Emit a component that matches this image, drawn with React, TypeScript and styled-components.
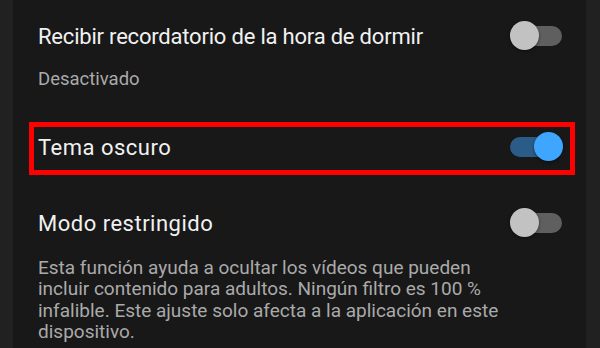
import React from "react";
import styled, { createGlobalStyle } from "styled-components";

const GlobalStyle = createGlobalStyle`
  html, body {
    margin: 0;
    padding: 0;
    background: #212121;
  }
  body {
    font-family: Roboto, "Noto Sans", sans-serif;
    -webkit-font-smoothing: antialiased;
  }
`;

const Page = styled.div`
  width: 600px;
  height: 348px;
  overflow: hidden;
  background: #212121;
  display: flex;
`;

const Panel = styled.div`
  margin-left: 13px;
  width: 573px;
  height: 348px;
  background: #181818;
  box-sizing: border-box;
  padding: 0 23px 0 25px;
  display: flex;
  flex-direction: column;
`;

const Row = styled.div<{ $top: number; $height: number; $highlight?: boolean }>`
  display: flex;
  align-items: center;
  justify-content: space-between;
  box-sizing: border-box;
  margin-top: ${(p) => p.$top}px;
  height: ${(p) => p.$height}px;
  ${(p) =>
    p.$highlight
      ? `
    margin-left: -9px;
    margin-right: -12px;
    border: 5px solid #ff0000;
    padding: 0 7px 3px 4px;
  `
      : ""}
`;

const Title = styled.div<{ $tracking: number }>`
  font-size: 22px;
  color: #f1f1f1;
  letter-spacing: ${(p) => p.$tracking}px;
  white-space: nowrap;
`;

const Subtitle = styled.div<{ $top: number }>`
  margin-top: ${(p) => p.$top}px;
  font-size: 18.5px;
  line-height: 22px;
  color: #aaaaaa;
`;

const Description = styled.div<{ $top: number }>`
  margin-top: ${(p) => p.$top}px;
  font-size: 19px;
  line-height: 21.3px;
  color: #aaaaaa;
  max-width: 470px;
`;

const Switch = styled.div`
  position: relative;
  width: 53px;
  height: 30px;
  flex: 0 0 auto;
`;

const Track = styled.div<{ $on: boolean }>`
  position: absolute;
  left: 0;
  right: 1px;
  top: 5px;
  height: 20px;
  border-radius: 10px;
  background: ${(p) => (p.$on ? "#2b5c88" : "#5f5f5f")};
`;

const Thumb = styled.div<{ $on: boolean }>`
  position: absolute;
  top: 0;
  ${(p) => (p.$on ? "right: 0;" : "left: 0;")}
  width: 29px;
  height: 29px;
  border-radius: 50%;
  background: ${(p) => (p.$on ? "#3ea6ff" : "#c2c2c2")};
  box-shadow: 0 1px 3px rgba(0, 0, 0, 0.5);
`;

const Toggle = ({ on }: { on: boolean }) => (
  <Switch>
    <Track $on={on} />
    <Thumb $on={on} />
  </Switch>
);

export default function App() {
  return (
    <>
      <GlobalStyle />
      <Page>
        <Panel>
          <Row $top={12} $height={48}>
            <Title $tracking={-0.2}>Recibir recordatorio de la hora de dormir</Title>
            <Toggle on={false} />
          </Row>
          <Subtitle $top={8}>Desactivado</Subtitle>
          <Row $top={32} $height={53} $highlight>
            <Title $tracking={0.5}>Tema oscuro</Title>
            <Toggle on={true} />
          </Row>
          <Row $top={24} $height={48}>
            <Title $tracking={0.5}>Modo restringido</Title>
            <Toggle on={false} />
          </Row>
          <Description $top={10}>
            Esta función ayuda a ocultar los vídeos que pueden incluir contenido
            para adultos. Ningún filtro es 100 % infalible. Este ajuste solo
            afecta a la aplicación en este dispositivo.
          </Description>
        </Panel>
      </Page>
    </>
  );
}
